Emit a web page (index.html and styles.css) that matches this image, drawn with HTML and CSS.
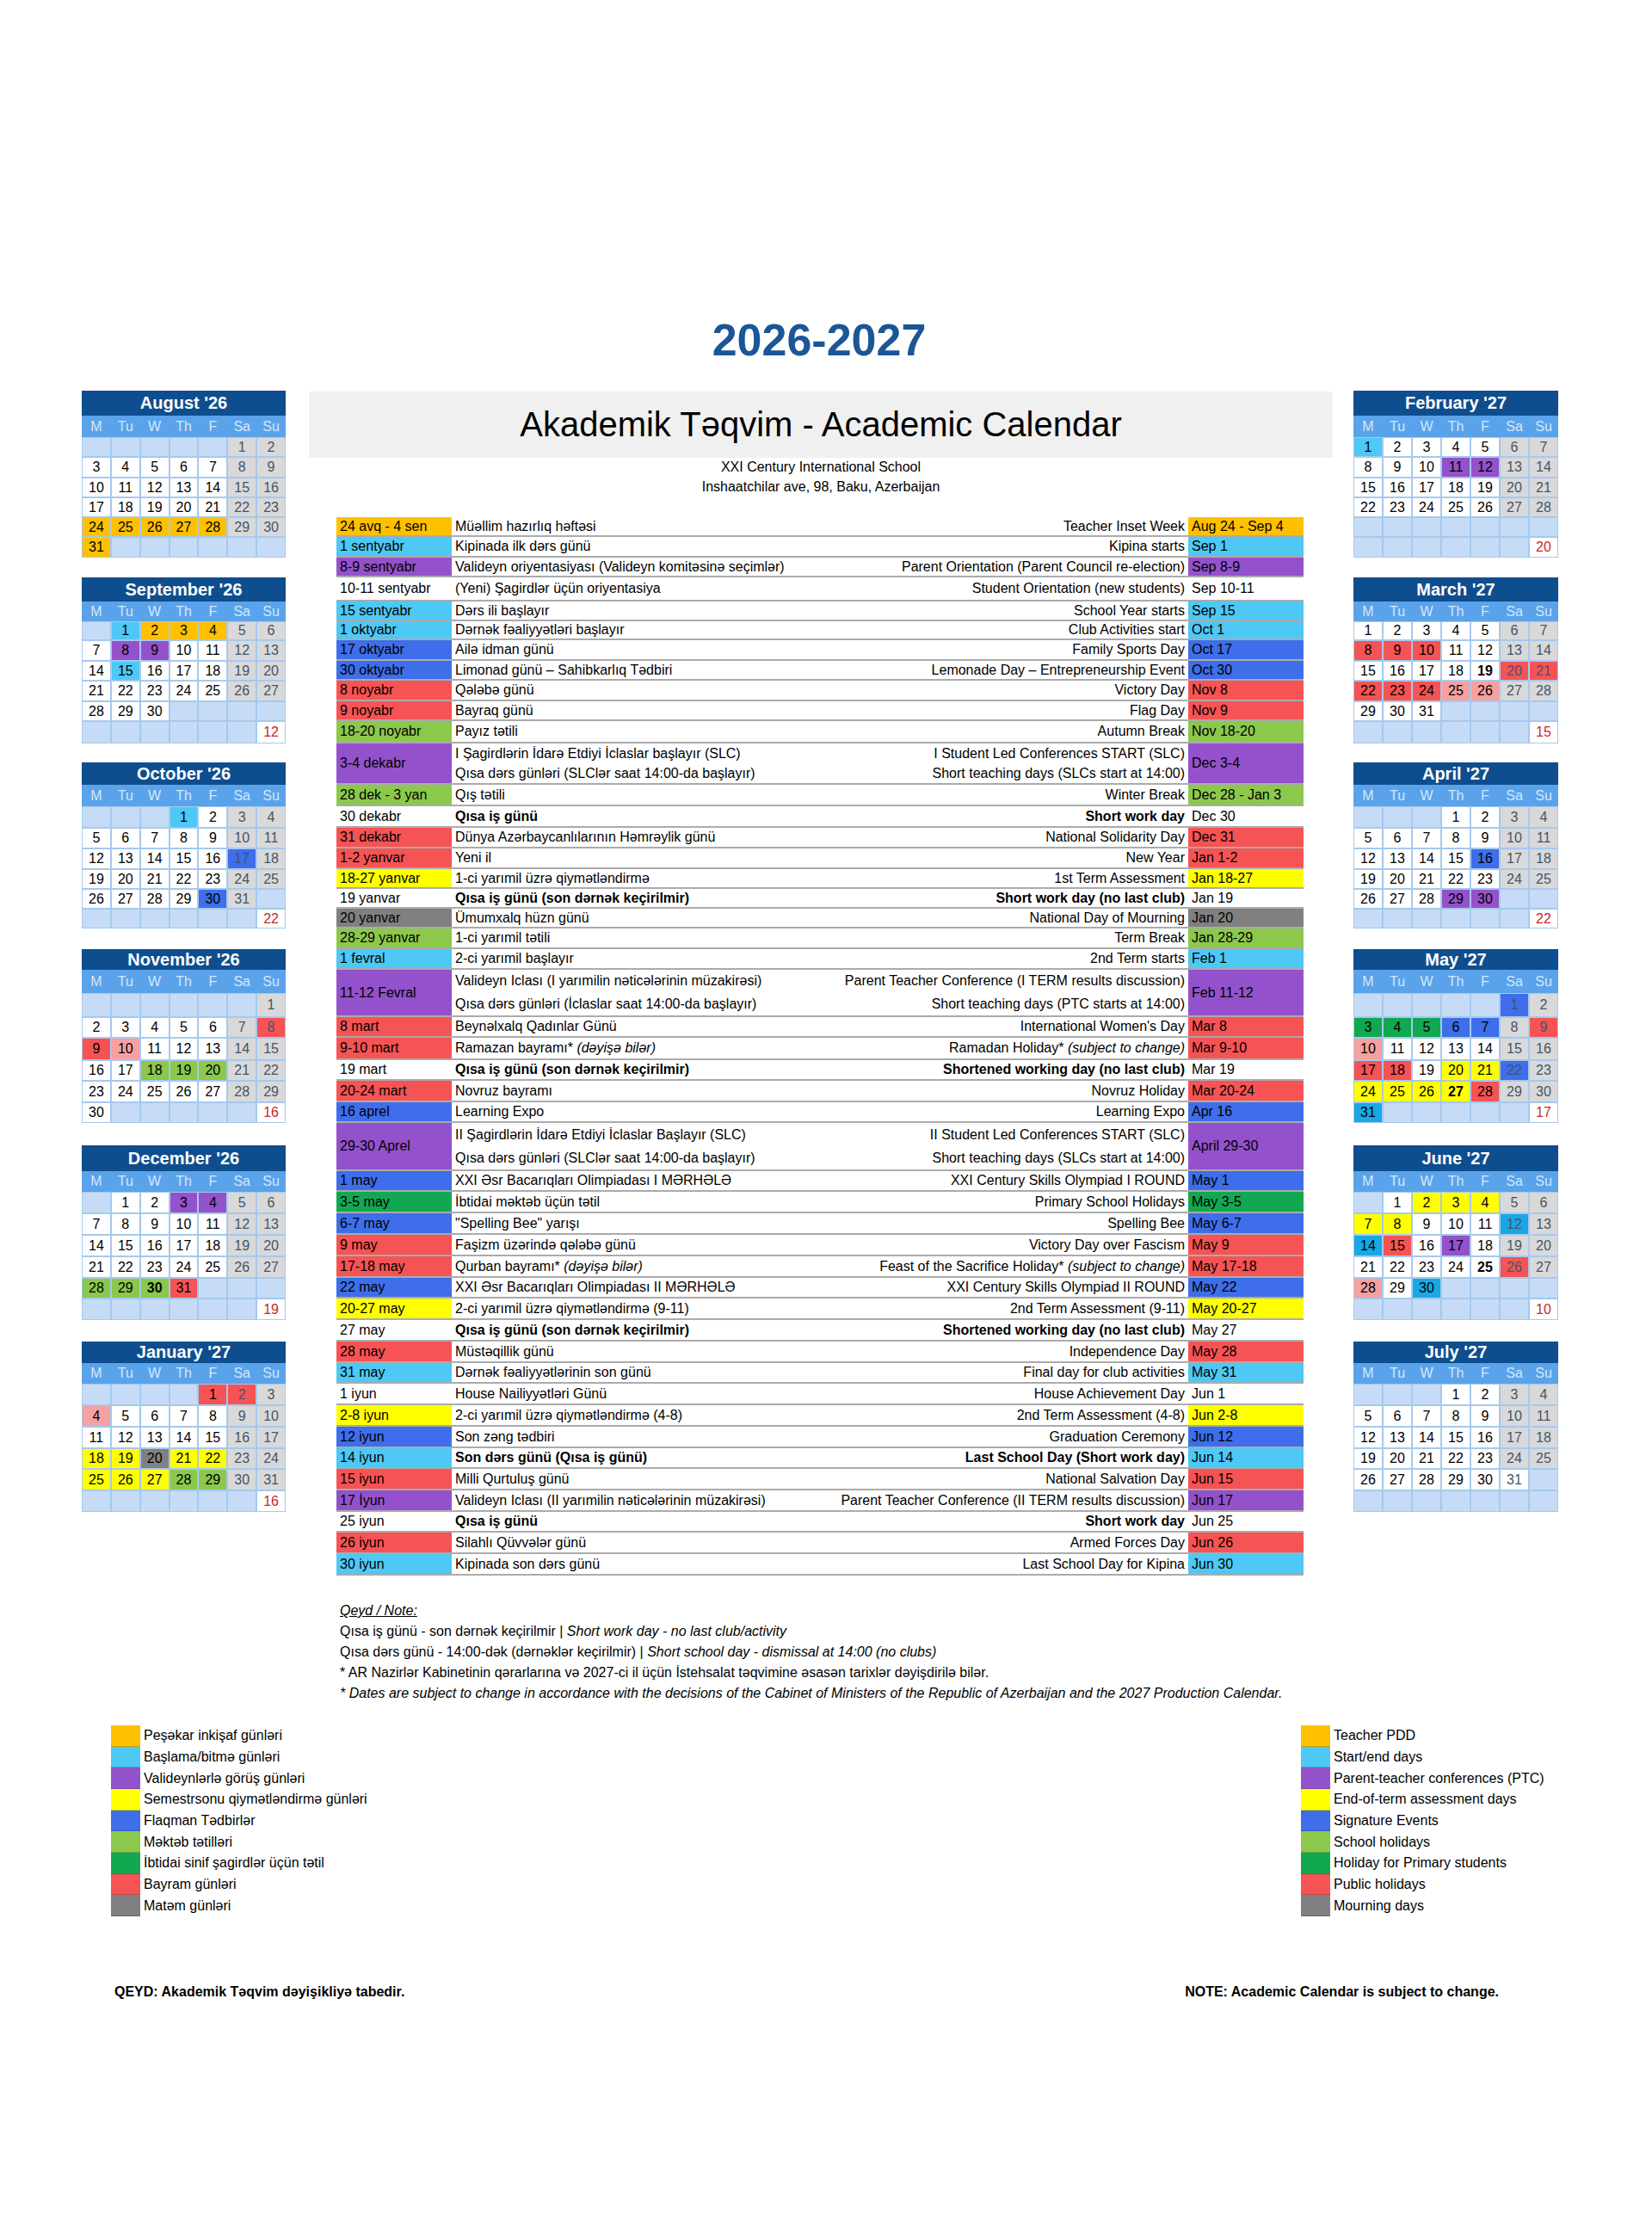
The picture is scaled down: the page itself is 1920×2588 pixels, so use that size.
FILE: index.html
```html
<!DOCTYPE html>
<html lang="az">
<head>
<meta charset="utf-8">
<title>2026-2027 Akademik Təqvim - Academic Calendar</title>
<link rel="stylesheet" href="styles.css">
</head>
<body>
<div class="page">
  <h1 class="year">2026-2027</h1>

  <div class="main">
    <!-- LEFT CALENDARS -->
    <div class="side">
      <div class="cal k1">
        <div class="hd">August '26</div>
        <span class="wd">M</span><span class="wd">Tu</span><span class="wd">W</span><span class="wd">Th</span><span class="wd">F</span><span class="wd">Sa</span><span class="wd">Su</span>
        <span class="e"></span><span class="e"></span><span class="e"></span><span class="e"></span><span class="e"></span><span class="we">1</span><span class="we">2</span>
        <span>3</span><span>4</span><span>5</span><span>6</span><span>7</span><span class="we">8</span><span class="we">9</span>
        <span>10</span><span>11</span><span>12</span><span>13</span><span>14</span><span class="we">15</span><span class="we">16</span>
        <span>17</span><span>18</span><span>19</span><span>20</span><span>21</span><span class="we">22</span><span class="we">23</span>
        <span class="o">24</span><span class="o">25</span><span class="o">26</span><span class="o">27</span><span class="o">28</span><span class="we">29</span><span class="we">30</span>
        <span class="o">31</span><span class="e"></span><span class="e"></span><span class="e"></span><span class="e"></span><span class="e"></span><span class="e"></span>
      </div>

      <div class="cal k2">
        <div class="hd">September '26</div>
        <span class="wd">M</span><span class="wd">Tu</span><span class="wd">W</span><span class="wd">Th</span><span class="wd">F</span><span class="wd">Sa</span><span class="wd">Su</span>
        <span class="e"></span><span class="lc">1</span><span class="o">2</span><span class="o">3</span><span class="o">4</span><span class="we">5</span><span class="we">6</span>
        <span>7</span><span class="p">8</span><span class="p">9</span><span>10</span><span>11</span><span class="we">12</span><span class="we">13</span>
        <span>14</span><span class="lc">15</span><span>16</span><span>17</span><span>18</span><span class="we">19</span><span class="we">20</span>
        <span>21</span><span>22</span><span>23</span><span>24</span><span>25</span><span class="we">26</span><span class="we">27</span>
        <span>28</span><span>29</span><span>30</span><span class="e"></span><span class="e"></span><span class="e"></span><span class="e"></span>
        <span class="e"></span><span class="e"></span><span class="e"></span><span class="e"></span><span class="e"></span><span class="e"></span><span class="n">12</span>
      </div>

      <div class="cal k3">
        <div class="hd">October '26</div>
        <span class="wd">M</span><span class="wd">Tu</span><span class="wd">W</span><span class="wd">Th</span><span class="wd">F</span><span class="wd">Sa</span><span class="wd">Su</span>
        <span class="e"></span><span class="e"></span><span class="e"></span><span class="lc">1</span><span>2</span><span class="we">3</span><span class="we">4</span>
        <span>5</span><span>6</span><span>7</span><span>8</span><span>9</span><span class="we">10</span><span class="we">11</span>
        <span>12</span><span>13</span><span>14</span><span>15</span><span>16</span><span class="we bl">17</span><span class="we">18</span>
        <span>19</span><span>20</span><span>21</span><span>22</span><span>23</span><span class="we">24</span><span class="we">25</span>
        <span>26</span><span>27</span><span>28</span><span>29</span><span class="bl">30</span><span class="we">31</span><span class="e"></span>
        <span class="e"></span><span class="e"></span><span class="e"></span><span class="e"></span><span class="e"></span><span class="e"></span><span class="n">22</span>
      </div>

      <div class="cal k4">
        <div class="hd">November '26</div>
        <span class="wd">M</span><span class="wd">Tu</span><span class="wd">W</span><span class="wd">Th</span><span class="wd">F</span><span class="wd">Sa</span><span class="wd">Su</span>
        <span class="e"></span><span class="e"></span><span class="e"></span><span class="e"></span><span class="e"></span><span class="e"></span><span class="we">1</span>
        <span>2</span><span>3</span><span>4</span><span>5</span><span>6</span><span class="we">7</span><span class="we r">8</span>
        <span class="r">9</span><span class="pk">10</span><span>11</span><span>12</span><span>13</span><span class="we">14</span><span class="we">15</span>
        <span>16</span><span>17</span><span class="g">18</span><span class="g">19</span><span class="g">20</span><span class="we">21</span><span class="we">22</span>
        <span>23</span><span>24</span><span>25</span><span>26</span><span>27</span><span class="we">28</span><span class="we">29</span>
        <span>30</span><span class="e"></span><span class="e"></span><span class="e"></span><span class="e"></span><span class="e"></span><span class="n">16</span>
      </div>

      <div class="cal k5">
        <div class="hd">December '26</div>
        <span class="wd">M</span><span class="wd">Tu</span><span class="wd">W</span><span class="wd">Th</span><span class="wd">F</span><span class="wd">Sa</span><span class="wd">Su</span>
        <span class="e"></span><span>1</span><span>2</span><span class="p">3</span><span class="p">4</span><span class="we">5</span><span class="we">6</span>
        <span>7</span><span>8</span><span>9</span><span>10</span><span>11</span><span class="we">12</span><span class="we">13</span>
        <span>14</span><span>15</span><span>16</span><span>17</span><span>18</span><span class="we">19</span><span class="we">20</span>
        <span>21</span><span>22</span><span>23</span><span>24</span><span>25</span><span class="we">26</span><span class="we">27</span>
        <span class="g">28</span><span class="g">29</span><span class="g bd">30</span><span class="r">31</span><span class="e"></span><span class="e"></span><span class="e"></span>
        <span class="e"></span><span class="e"></span><span class="e"></span><span class="e"></span><span class="e"></span><span class="e"></span><span class="n">19</span>
      </div>

      <div class="cal k6">
        <div class="hd">January '27</div>
        <span class="wd">M</span><span class="wd">Tu</span><span class="wd">W</span><span class="wd">Th</span><span class="wd">F</span><span class="wd">Sa</span><span class="wd">Su</span>
        <span class="e"></span><span class="e"></span><span class="e"></span><span class="e"></span><span class="r">1</span><span class="we r">2</span><span class="we">3</span>
        <span class="pk">4</span><span>5</span><span>6</span><span>7</span><span>8</span><span class="we">9</span><span class="we">10</span>
        <span>11</span><span>12</span><span>13</span><span>14</span><span>15</span><span class="we">16</span><span class="we">17</span>
        <span class="y">18</span><span class="y">19</span><span class="gr">20</span><span class="y">21</span><span class="y">22</span><span class="we">23</span><span class="we">24</span>
        <span class="y">25</span><span class="y">26</span><span class="y">27</span><span class="g">28</span><span class="g">29</span><span class="we">30</span><span class="we">31</span>
        <span class="e"></span><span class="e"></span><span class="e"></span><span class="e"></span><span class="e"></span><span class="e"></span><span class="n">16</span>
      </div>
    </div>

    <!-- CENTER -->
    <div class="center">
      <div class="band">Akademik Təqvim - Academic Calendar</div>
      <div class="sub">
        <div>XXI Century International School</div>
        <div>Inshaatchilar ave, 98, Baku, Azerbaijan</div>
      </div>

      <div class="table">
        <div class="row o h23"><div class="dt">24 avq - 4 sen</div><div class="mid"><span>Müəllim hazırlıq həftəsi</span><span>Teacher Inset Week</span></div><div class="dt">Aug 24 - Sep 4</div></div>
        <div class="row lc"><div class="dt">1 sentyabr</div><div class="mid"><span>Kipinada ilk dərs günü</span><span>Kipina starts</span></div><div class="dt">Sep 1</div></div>
        <div class="row p h23"><div class="dt">8-9 sentyabr</div><div class="mid"><span>Valideyn oriyentasiyası (Valideyn komitəsinə seçimlər)</span><span>Parent Orientation (Parent Council re-election)</span></div><div class="dt">Sep 8-9</div></div>
        <div class="row h28"><div class="dt">10-11 sentyabr</div><div class="mid"><span>(Yeni) Şagirdlər üçün oriyentasiya</span><span>Student Orientation (new students)</span></div><div class="dt">Sep 10-11</div></div>
        <div class="row lc h23"><div class="dt">15 sentyabr</div><div class="mid"><span>Dərs ili başlayır</span><span>School Year starts</span></div><div class="dt">Sep 15</div></div>
        <div class="row lc h22"><div class="dt">1 oktyabr</div><div class="mid"><span>Dərnək fəaliyyətləri başlayır</span><span>Club Activities start</span></div><div class="dt">Oct 1</div></div>
        <div class="row bl"><div class="dt">17 oktyabr</div><div class="mid"><span>Ailə idman günü</span><span>Family Sports Day</span></div><div class="dt">Oct 17</div></div>
        <div class="row bl h23"><div class="dt">30 oktyabr</div><div class="mid"><span>Limonad günü – Sahibkarlıq Tədbiri</span><span>Lemonade Day – Entrepreneurship Event</span></div><div class="dt">Oct 30</div></div>
        <div class="row r"><div class="dt">8 noyabr</div><div class="mid"><span>Qələbə günü</span><span>Victory Day</span></div><div class="dt">Nov 8</div></div>
        <div class="row r h23"><div class="dt">9 noyabr</div><div class="mid"><span>Bayraq günü</span><span>Flag Day</span></div><div class="dt">Nov 9</div></div>
        <div class="row g h26"><div class="dt">18-20 noyabr</div><div class="mid"><span>Payız tətili</span><span>Autumn Break</span></div><div class="dt">Nov 18-20</div></div>
        <div class="row p d48"><div class="dt">3-4 dekabr</div><div class="mid two"><div class="ln"><span>I Şagirdlərin İdarə Etdiyi İclaslar başlayır (SLC)</span><span>I Student Led Conferences START (SLC)</span></div><div class="ln"><span>Qısa dərs günləri (SLClər saat 14:00-da başlayır)</span><span>Short teaching days (SLCs start at 14:00)</span></div></div><div class="dt">Dec 3-4</div></div>
        <div class="row g h25"><div class="dt">28 dek - 3 yan</div><div class="mid"><span>Qış tətili</span><span>Winter Break</span></div><div class="dt">Dec 28 - Jan 3</div></div>
        <div class="row h25"><div class="dt">30 dekabr</div><div class="mid"><span><b>Qısa iş günü</b></span><span><b>Short work day</b></span></div><div class="dt">Dec 30</div></div>
        <div class="row r"><div class="dt">31 dekabr</div><div class="mid"><span>Dünya Azərbaycanlılarının Həmrəylik günü</span><span>National Solidarity Day</span></div><div class="dt">Dec 31</div></div>
        <div class="row r"><div class="dt">1-2 yanvar</div><div class="mid"><span>Yeni il</span><span>New Year</span></div><div class="dt">Jan 1-2</div></div>
        <div class="row y h23"><div class="dt">18-27 yanvar</div><div class="mid"><span>1-ci yarımil üzrə qiymətləndirmə</span><span>1st Term Assessment</span></div><div class="dt">Jan 18-27</div></div>
        <div class="row h23"><div class="dt">19 yanvar</div><div class="mid"><span><b>Qısa iş günü (son dərnək keçirilmir)</b></span><span><b>Short work day (no last club)</b></span></div><div class="dt">Jan 19</div></div>
        <div class="row gr h23"><div class="dt">20 yanvar</div><div class="mid"><span>Ümumxalq hüzn günü</span><span>National Day of Mourning</span></div><div class="dt">Jan 20</div></div>
        <div class="row g"><div class="dt">28-29 yanvar</div><div class="mid"><span>1-ci yarımil tətili</span><span>Term Break</span></div><div class="dt">Jan 28-29</div></div>
        <div class="row lc"><div class="dt">1 fevral</div><div class="mid"><span>2-ci yarımil başlayır</span><span>2nd Term starts</span></div><div class="dt">Feb 1</div></div>
        <div class="row p d55"><div class="dt">11-12 Fevral</div><div class="mid two"><div class="ln"><span>Valideyn Iclası (I yarımilin nəticələrinin müzakirəsi)</span><span>Parent Teacher Conference (I TERM results discussion)</span></div><div class="ln"><span>Qısa dərs günləri (İclaslar saat 14:00-da başlayır)</span><span>Short teaching days (PTC starts at 14:00)</span></div></div><div class="dt">Feb 11-12</div></div>
        <div class="row r"><div class="dt">8 mart</div><div class="mid"><span>Beynəlxalq Qadınlar Günü</span><span>International Women's Day</span></div><div class="dt">Mar 8</div></div>
        <div class="row r h26"><div class="dt">9-10 mart</div><div class="mid"><span>Ramazan bayramı* <i>(dəyişə bilər)</i></span><span>Ramadan Holiday* <i>(subject to change)</i></span></div><div class="dt">Mar 9-10</div></div>
        <div class="row"><div class="dt">19 mart</div><div class="mid"><span><b>Qısa iş günü (son dərnək keçirilmir)</b></span><span><b>Shortened working day (no last club)</b></span></div><div class="dt">Mar 19</div></div>
        <div class="row r h25"><div class="dt">20-24 mart</div><div class="mid"><span>Novruz bayramı</span><span>Novruz Holiday</span></div><div class="dt">Mar 20-24</div></div>
        <div class="row bl"><div class="dt">16 aprel</div><div class="mid"><span>Learning Expo</span><span>Learning Expo</span></div><div class="dt">Apr 16</div></div>
        <div class="row p d56"><div class="dt">29-30 Aprel</div><div class="mid two"><div class="ln"><span>II Şagirdlərin İdarə Etdiyi İclaslar Başlayır (SLC)</span><span>II Student Led Conferences START (SLC)</span></div><div class="ln"><span>Qısa dərs günləri (SLClər saat 14:00-da başlayır)</span><span>Short teaching days (SLCs start at 14:00)</span></div></div><div class="dt">April 29-30</div></div>
        <div class="row bl"><div class="dt">1 may</div><div class="mid"><span>XXI Əsr Bacarıqları Olimpiadası I MƏRHƏLƏ</span><span>XXI Century Skills Olympiad I ROUND</span></div><div class="dt">May 1</div></div>
        <div class="row dg h25"><div class="dt">3-5 may</div><div class="mid"><span>İbtidai məktəb üçün tətil</span><span>Primary School Holidays</span></div><div class="dt">May 3-5</div></div>
        <div class="row bl h25"><div class="dt">6-7 may</div><div class="mid"><span>"Spelling Bee" yarışı</span><span>Spelling Bee</span></div><div class="dt">May 6-7</div></div>
        <div class="row r h25"><div class="dt">9 may</div><div class="mid"><span>Faşizm üzərində qələbə günü</span><span>Victory Day over Fascism</span></div><div class="dt">May 9</div></div>
        <div class="row r h25"><div class="dt">17-18 may</div><div class="mid"><span>Qurban bayramı* <i>(dəyişə bilər)</i></span><span>Feast of the Sacrifice Holiday* <i>(subject to change)</i></span></div><div class="dt">May 17-18</div></div>
        <div class="row bl"><div class="dt">22 may</div><div class="mid"><span>XXI Əsr Bacarıqları Olimpiadası II MƏRHƏLƏ</span><span>XXI Century Skills Olympiad II ROUND</span></div><div class="dt">May 22</div></div>
        <div class="row y h25"><div class="dt">20-27 may</div><div class="mid"><span>2-ci yarımil üzrə qiymətləndirmə (9-11)</span><span>2nd Term Assessment (9-11)</span></div><div class="dt">May 20-27</div></div>
        <div class="row h25"><div class="dt">27 may</div><div class="mid"><span><b>Qısa iş günü (son dərnək keçirilmir)</b></span><span><b>Shortened working day (no last club)</b></span></div><div class="dt">May 27</div></div>
        <div class="row r h25"><div class="dt">28 may</div><div class="mid"><span>Müstəqillik günü</span><span>Independence Day</span></div><div class="dt">May 28</div></div>
        <div class="row lc"><div class="dt">31 may</div><div class="mid"><span>Dərnək fəaliyyətlərinin son günü</span><span>Final day for club activities</span></div><div class="dt">May 31</div></div>
        <div class="row h25"><div class="dt">1 iyun</div><div class="mid"><span>House Nailiyyətləri Günü</span><span>House Achievement Day</span></div><div class="dt">Jun 1</div></div>
        <div class="row y h25"><div class="dt">2-8 iyun</div><div class="mid"><span>2-ci yarımil üzrə qiymətləndirmə (4-8)</span><span>2nd Term Assessment (4-8)</span></div><div class="dt">Jun 2-8</div></div>
        <div class="row bl h25"><div class="dt">12 iyun</div><div class="mid"><span>Son zəng tədbiri</span><span>Graduation Ceremony</span></div><div class="dt">Jun 12</div></div>
        <div class="row lc"><div class="dt">14 iyun</div><div class="mid"><span><b>Son dərs günü (Qısa iş günü)</b></span><span><b>Last School Day (Short work day)</b></span></div><div class="dt">Jun 14</div></div>
        <div class="row r h25"><div class="dt">15 iyun</div><div class="mid"><span>Milli Qurtuluş günü</span><span>National Salvation Day</span></div><div class="dt">Jun 15</div></div>
        <div class="row p h25"><div class="dt">17 İyun</div><div class="mid"><span>Valideyn Iclası (II yarımilin nəticələrinin müzakirəsi)</span><span>Parent Teacher Conference (II TERM results discussion)</span></div><div class="dt">Jun 17</div></div>
        <div class="row"><div class="dt">25 iyun</div><div class="mid"><span><b>Qısa iş günü</b></span><span><b>Short work day</b></span></div><div class="dt">Jun 25</div></div>
        <div class="row r h25"><div class="dt">26 iyun</div><div class="mid"><span>Silahlı Qüvvələr günü</span><span>Armed Forces Day</span></div><div class="dt">Jun 26</div></div>
        <div class="row lc h25"><div class="dt">30 iyun</div><div class="mid"><span>Kipinada son dərs günü</span><span>Last School Day for Kipina</span></div><div class="dt">Jun 30</div></div>
      </div>

      <div class="notes">
        <div class="nt"><i>Qeyd / Note:</i></div>
        <div>Qısa iş günü - son dərnək keçirilmir | <i>Short work day - no last club/activity</i></div>
        <div>Qısa dərs günü - 14:00-dək (dərnəklər keçirilmir) | <i>Short school day - dismissal at 14:00 (no clubs)</i></div>
        <div>* AR Nazirlər Kabinetinin qərarlarına və 2027-ci il üçün İstehsalat təqvimine əsasən tarixlər dəyişdirilə bilər.</div>
        <div><i>* Dates are subject to change in accordance with the decisions of the Cabinet of Ministers of the Republic of Azerbaijan and the 2027 Production Calendar.</i></div>
      </div>
    </div>

    <!-- RIGHT CALENDARS -->
    <div class="side right">
      <div class="cal k1">
        <div class="hd">February '27</div>
        <span class="wd">M</span><span class="wd">Tu</span><span class="wd">W</span><span class="wd">Th</span><span class="wd">F</span><span class="wd">Sa</span><span class="wd">Su</span>
        <span class="lc">1</span><span>2</span><span>3</span><span>4</span><span>5</span><span class="we">6</span><span class="we">7</span>
        <span>8</span><span>9</span><span>10</span><span class="p">11</span><span class="p">12</span><span class="we">13</span><span class="we">14</span>
        <span>15</span><span>16</span><span>17</span><span>18</span><span>19</span><span class="we">20</span><span class="we">21</span>
        <span>22</span><span>23</span><span>24</span><span>25</span><span>26</span><span class="we">27</span><span class="we">28</span>
        <span class="e"></span><span class="e"></span><span class="e"></span><span class="e"></span><span class="e"></span><span class="e"></span><span class="e"></span>
        <span class="e"></span><span class="e"></span><span class="e"></span><span class="e"></span><span class="e"></span><span class="e"></span><span class="n">20</span>
      </div>

      <div class="cal k2">
        <div class="hd">March '27</div>
        <span class="wd">M</span><span class="wd">Tu</span><span class="wd">W</span><span class="wd">Th</span><span class="wd">F</span><span class="wd">Sa</span><span class="wd">Su</span>
        <span>1</span><span>2</span><span>3</span><span>4</span><span>5</span><span class="we">6</span><span class="we">7</span>
        <span class="r">8</span><span class="r">9</span><span class="r">10</span><span>11</span><span>12</span><span class="we">13</span><span class="we">14</span>
        <span>15</span><span>16</span><span>17</span><span>18</span><span class="bd">19</span><span class="we r">20</span><span class="we r">21</span>
        <span class="r">22</span><span class="r">23</span><span class="r">24</span><span class="pk">25</span><span class="pk">26</span><span class="we">27</span><span class="we">28</span>
        <span>29</span><span>30</span><span>31</span><span class="e"></span><span class="e"></span><span class="e"></span><span class="e"></span>
        <span class="e"></span><span class="e"></span><span class="e"></span><span class="e"></span><span class="e"></span><span class="e"></span><span class="n">15</span>
      </div>

      <div class="cal k3">
        <div class="hd">April '27</div>
        <span class="wd">M</span><span class="wd">Tu</span><span class="wd">W</span><span class="wd">Th</span><span class="wd">F</span><span class="wd">Sa</span><span class="wd">Su</span>
        <span class="e"></span><span class="e"></span><span class="e"></span><span>1</span><span>2</span><span class="we">3</span><span class="we">4</span>
        <span>5</span><span>6</span><span>7</span><span>8</span><span>9</span><span class="we">10</span><span class="we">11</span>
        <span>12</span><span>13</span><span>14</span><span>15</span><span class="bl">16</span><span class="we">17</span><span class="we">18</span>
        <span>19</span><span>20</span><span>21</span><span>22</span><span>23</span><span class="we">24</span><span class="we">25</span>
        <span>26</span><span>27</span><span>28</span><span class="p">29</span><span class="p">30</span><span class="e"></span><span class="e"></span>
        <span class="e"></span><span class="e"></span><span class="e"></span><span class="e"></span><span class="e"></span><span class="e"></span><span class="n">22</span>
      </div>

      <div class="cal k4">
        <div class="hd">May '27</div>
        <span class="wd">M</span><span class="wd">Tu</span><span class="wd">W</span><span class="wd">Th</span><span class="wd">F</span><span class="wd">Sa</span><span class="wd">Su</span>
        <span class="e"></span><span class="e"></span><span class="e"></span><span class="e"></span><span class="e"></span><span class="we bl">1</span><span class="we">2</span>
        <span class="dg">3</span><span class="dg">4</span><span class="dg">5</span><span class="bl">6</span><span class="bl">7</span><span class="we">8</span><span class="we r">9</span>
        <span class="pk">10</span><span>11</span><span>12</span><span>13</span><span>14</span><span class="we">15</span><span class="we">16</span>
        <span class="r">17</span><span class="r">18</span><span>19</span><span class="y">20</span><span class="y">21</span><span class="we bl">22</span><span class="we">23</span>
        <span class="y">24</span><span class="y">25</span><span class="y">26</span><span class="y bd">27</span><span class="r">28</span><span class="we">29</span><span class="we">30</span>
        <span class="dc">31</span><span class="e"></span><span class="e"></span><span class="e"></span><span class="e"></span><span class="e"></span><span class="n">17</span>
      </div>

      <div class="cal k5">
        <div class="hd">June '27</div>
        <span class="wd">M</span><span class="wd">Tu</span><span class="wd">W</span><span class="wd">Th</span><span class="wd">F</span><span class="wd">Sa</span><span class="wd">Su</span>
        <span class="e"></span><span>1</span><span class="y">2</span><span class="y">3</span><span class="y">4</span><span class="we">5</span><span class="we">6</span>
        <span class="y">7</span><span class="y">8</span><span>9</span><span>10</span><span>11</span><span class="we dc">12</span><span class="we">13</span>
        <span class="dc">14</span><span class="r">15</span><span>16</span><span class="p">17</span><span>18</span><span class="we">19</span><span class="we">20</span>
        <span>21</span><span>22</span><span>23</span><span>24</span><span class="bd">25</span><span class="we r">26</span><span class="we">27</span>
        <span class="pk">28</span><span>29</span><span class="dc">30</span><span class="e"></span><span class="e"></span><span class="e"></span><span class="e"></span>
        <span class="e"></span><span class="e"></span><span class="e"></span><span class="e"></span><span class="e"></span><span class="e"></span><span class="n">10</span>
      </div>

      <div class="cal k6">
        <div class="hd">July '27</div>
        <span class="wd">M</span><span class="wd">Tu</span><span class="wd">W</span><span class="wd">Th</span><span class="wd">F</span><span class="wd">Sa</span><span class="wd">Su</span>
        <span class="e"></span><span class="e"></span><span class="e"></span><span>1</span><span>2</span><span class="we">3</span><span class="we">4</span>
        <span>5</span><span>6</span><span>7</span><span>8</span><span>9</span><span class="we">10</span><span class="we">11</span>
        <span>12</span><span>13</span><span>14</span><span>15</span><span>16</span><span class="we">17</span><span class="we">18</span>
        <span>19</span><span>20</span><span>21</span><span>22</span><span>23</span><span class="we">24</span><span class="we">25</span>
        <span>26</span><span>27</span><span>28</span><span>29</span><span>30</span><span class="ws">31</span><span class="e"></span>
        <span class="e"></span><span class="e"></span><span class="e"></span><span class="e"></span><span class="e"></span><span class="e"></span><span class="e"></span>
      </div>
    </div>
  </div>

  <div class="legend">
    <div class="leg">
      <div class="li"><span class="sw o"></span>Peşəkar inkişaf günləri</div>
      <div class="li"><span class="sw lc"></span>Başlama/bitmə günləri</div>
      <div class="li"><span class="sw p"></span>Valideynlərlə görüş günləri</div>
      <div class="li"><span class="sw y"></span>Semestrsonu qiymətləndirmə günləri</div>
      <div class="li"><span class="sw bl"></span>Flaqman Tədbirlər</div>
      <div class="li"><span class="sw g"></span>Məktəb tətilləri</div>
      <div class="li"><span class="sw dg"></span>İbtidai sinif şagirdlər üçün tətil</div>
      <div class="li"><span class="sw r"></span>Bayram günləri</div>
      <div class="li"><span class="sw gr"></span>Matəm günləri</div>
    </div>
    <div class="leg leg-right">
      <div class="li"><span class="sw o"></span>Teacher PDD</div>
      <div class="li"><span class="sw lc"></span>Start/end days</div>
      <div class="li"><span class="sw p"></span>Parent-teacher conferences (PTC)</div>
      <div class="li"><span class="sw y"></span>End-of-term assessment days</div>
      <div class="li"><span class="sw bl"></span>Signature Events</div>
      <div class="li"><span class="sw g"></span>School holidays</div>
      <div class="li"><span class="sw dg"></span>Holiday for Primary students</div>
      <div class="li"><span class="sw r"></span>Public holidays</div>
      <div class="li"><span class="sw gr"></span>Mourning days</div>
    </div>
  </div>

  <div class="footer">
    <div>QEYD: Akademik Təqvim dəyişikliyə tabedir.</div>
    <div>NOTE: Academic Calendar is subject to change.</div>
  </div>
</div>
</body>
</html>
```

FILE: styles.css
```css
* { box-sizing: border-box; }

body {
  margin: 0;
  background: #ffffff;
  color: #000000;
  font-family: "Liberation Sans", Arial, sans-serif;
  font-size: 16px;
}

.page {
  width: 1920px;
  min-height: 2588px;
}

/* ---------- Year title ---------- */
.year {
  margin: 0;
  height: 425px;
  padding-top: 365px;
  padding-right: 16px;
  line-height: 60px;
  font-size: 52px;
  font-weight: bold;
  color: #1b5696;
  text-align: center;
}

/* ---------- Main three-column area ---------- */
.main {
  display: flex;
  align-items: flex-start;
  margin-top: 29px;
  padding-left: 95px;
}

.side {
  flex: none;
  width: 237px;
}

.side.right {
  width: 238px;
  margin-left: 24px;
}

.center {
  flex: none;
  width: 1190px;
  margin-left: 27px;
  padding-top: 1px;
}

/* ---------- Mini calendars ---------- */
.cal {
  display: grid;
  grid-template-columns: repeat(7, 1fr);
}

.cal.k1 { grid-template-rows: 29px 25px 23px 24px 23px 23px 23px 24px; }
.cal.k2 { margin-top: 23px; grid-template-rows: 28px 23px 22px 24px 23px 24px 23px 26px; }
.cal.k3 { margin-top: 22px; grid-template-rows: 26px 25px 25px 24px 24px 23px 23px 23px; }
.cal.k4 { margin-top: 24px; grid-template-rows: 24px 27px 28px 24px 26px 24px 25px 24px; }
.cal.k5 { margin-top: 26px; grid-template-rows: 30px 24px 25px 25px 25px 25px 24px 25px; }
.cal.k6 { margin-top: 25px; grid-template-rows: 25px 24px 25px 25px 25px 24px 25px 25px; }

.cal .hd {
  grid-column: 1 / -1;
  display: flex;
  align-items: center;
  justify-content: center;
  background: #0f4e8e;
  color: #ffffff;
  font-weight: bold;
  font-size: 20px;
}

.cal > span {
  display: flex;
  align-items: center;
  justify-content: center;
  border: 1px solid #a5c9ef;
  background: #ffffff;
  color: #000000;
  font-size: 16px;
}

.cal .wd {
  border: none;
  background: #5aa3ea;
  color: #d4e7fb;
}

.cal .e  { background: #c6dcf6; }
.cal .we { background: #d9d9d9; color: #44546a; }
.cal .ws { background: #ffffff; color: #44546a; }
.cal .n  { background: #ffffff; color: #c62828; }
.cal .bd { font-weight: bold; }

/* ---------- Category colours ---------- */
.o  { --c: #ffc000; }
.lc { --c: #4ec8f5; }
.dc { --c: #18a8e6; }
.p  { --c: #9352cb; }
.bl { --c: #3e6eea; }
.r  { --c: #f65354; }
.pk { --c: #f6a0a0; }
.g  { --c: #8cc84c; }
.dg { --c: #12a852; }
.y  { --c: #ffff00; }
.gr { --c: #808080; }

.cal .o, .cal .lc, .cal .dc, .cal .p, .cal .bl, .cal .r,
.cal .pk, .cal .g, .cal .dg, .cal .y, .cal .gr {
  background: var(--c);
}

/* ---------- Header band ---------- */
.band {
  height: 77px;
  display: flex;
  align-items: center;
  justify-content: center;
  background: #f0f0f0;
  font-size: 40px;
}

.sub {
  margin-top: -1px;
  text-align: center;
  line-height: 23px;
}

/* ---------- Events table ---------- */
.table {
  width: 1124px;
  margin: 24px 0 0 32px;
}

.row {
  display: grid;
  grid-template-columns: 134px 1fr 134px;
  height: 24px;
  border-bottom: 2px solid #ababab;
}

.row.h22 { height: 22px; }
.row.h23 { height: 23px; }
.row.h25 { height: 25px; }
.row.h26 { height: 26px; }
.row.h28 { height: 28px; }
.row.d48 { height: 48px; }
.row.d55 { height: 55px; }
.row.d56 { height: 56px; }

.row .dt {
  display: flex;
  align-items: center;
  padding-left: 4px;
  white-space: nowrap;
}

.row.o .dt, .row.lc .dt, .row.p .dt, .row.bl .dt, .row.r .dt,
.row.g .dt, .row.dg .dt, .row.y .dt, .row.gr .dt {
  background: var(--c);
}

.mid {
  display: flex;
  align-items: center;
  justify-content: space-between;
  padding: 0 4px;
  white-space: nowrap;
  background: #ffffff;
}

.mid.two {
  flex-direction: column;
  align-items: stretch;
  justify-content: stretch;
}

.mid .ln {
  flex: 1;
  display: flex;
  align-items: center;
  justify-content: space-between;
}

/* ---------- Notes ---------- */
.notes {
  margin: 29px 0 0 36px;
  line-height: 24px;
}

.notes .nt i {
  text-decoration: underline;
}

/* ---------- Legend ---------- */
.legend {
  display: flex;
  justify-content: space-between;
  margin-top: 25px;
  padding: 0 120px 0 129px;
}

.leg-right {
  width: 288px;
}

.li {
  display: flex;
  align-items: center;
  height: 24.67px;
}

.sw {
  flex: none;
  width: 34px;
  height: 100%;
  margin-right: 4px;
  background: var(--c);
  border-bottom: 1px solid rgba(0, 0, 0, 0.18);
}

/* ---------- Footer ---------- */
.footer {
  display: flex;
  justify-content: space-between;
  margin-top: 76px;
  padding: 0 178px 0 133px;
  line-height: 24px;
  font-weight: bold;
}
```
